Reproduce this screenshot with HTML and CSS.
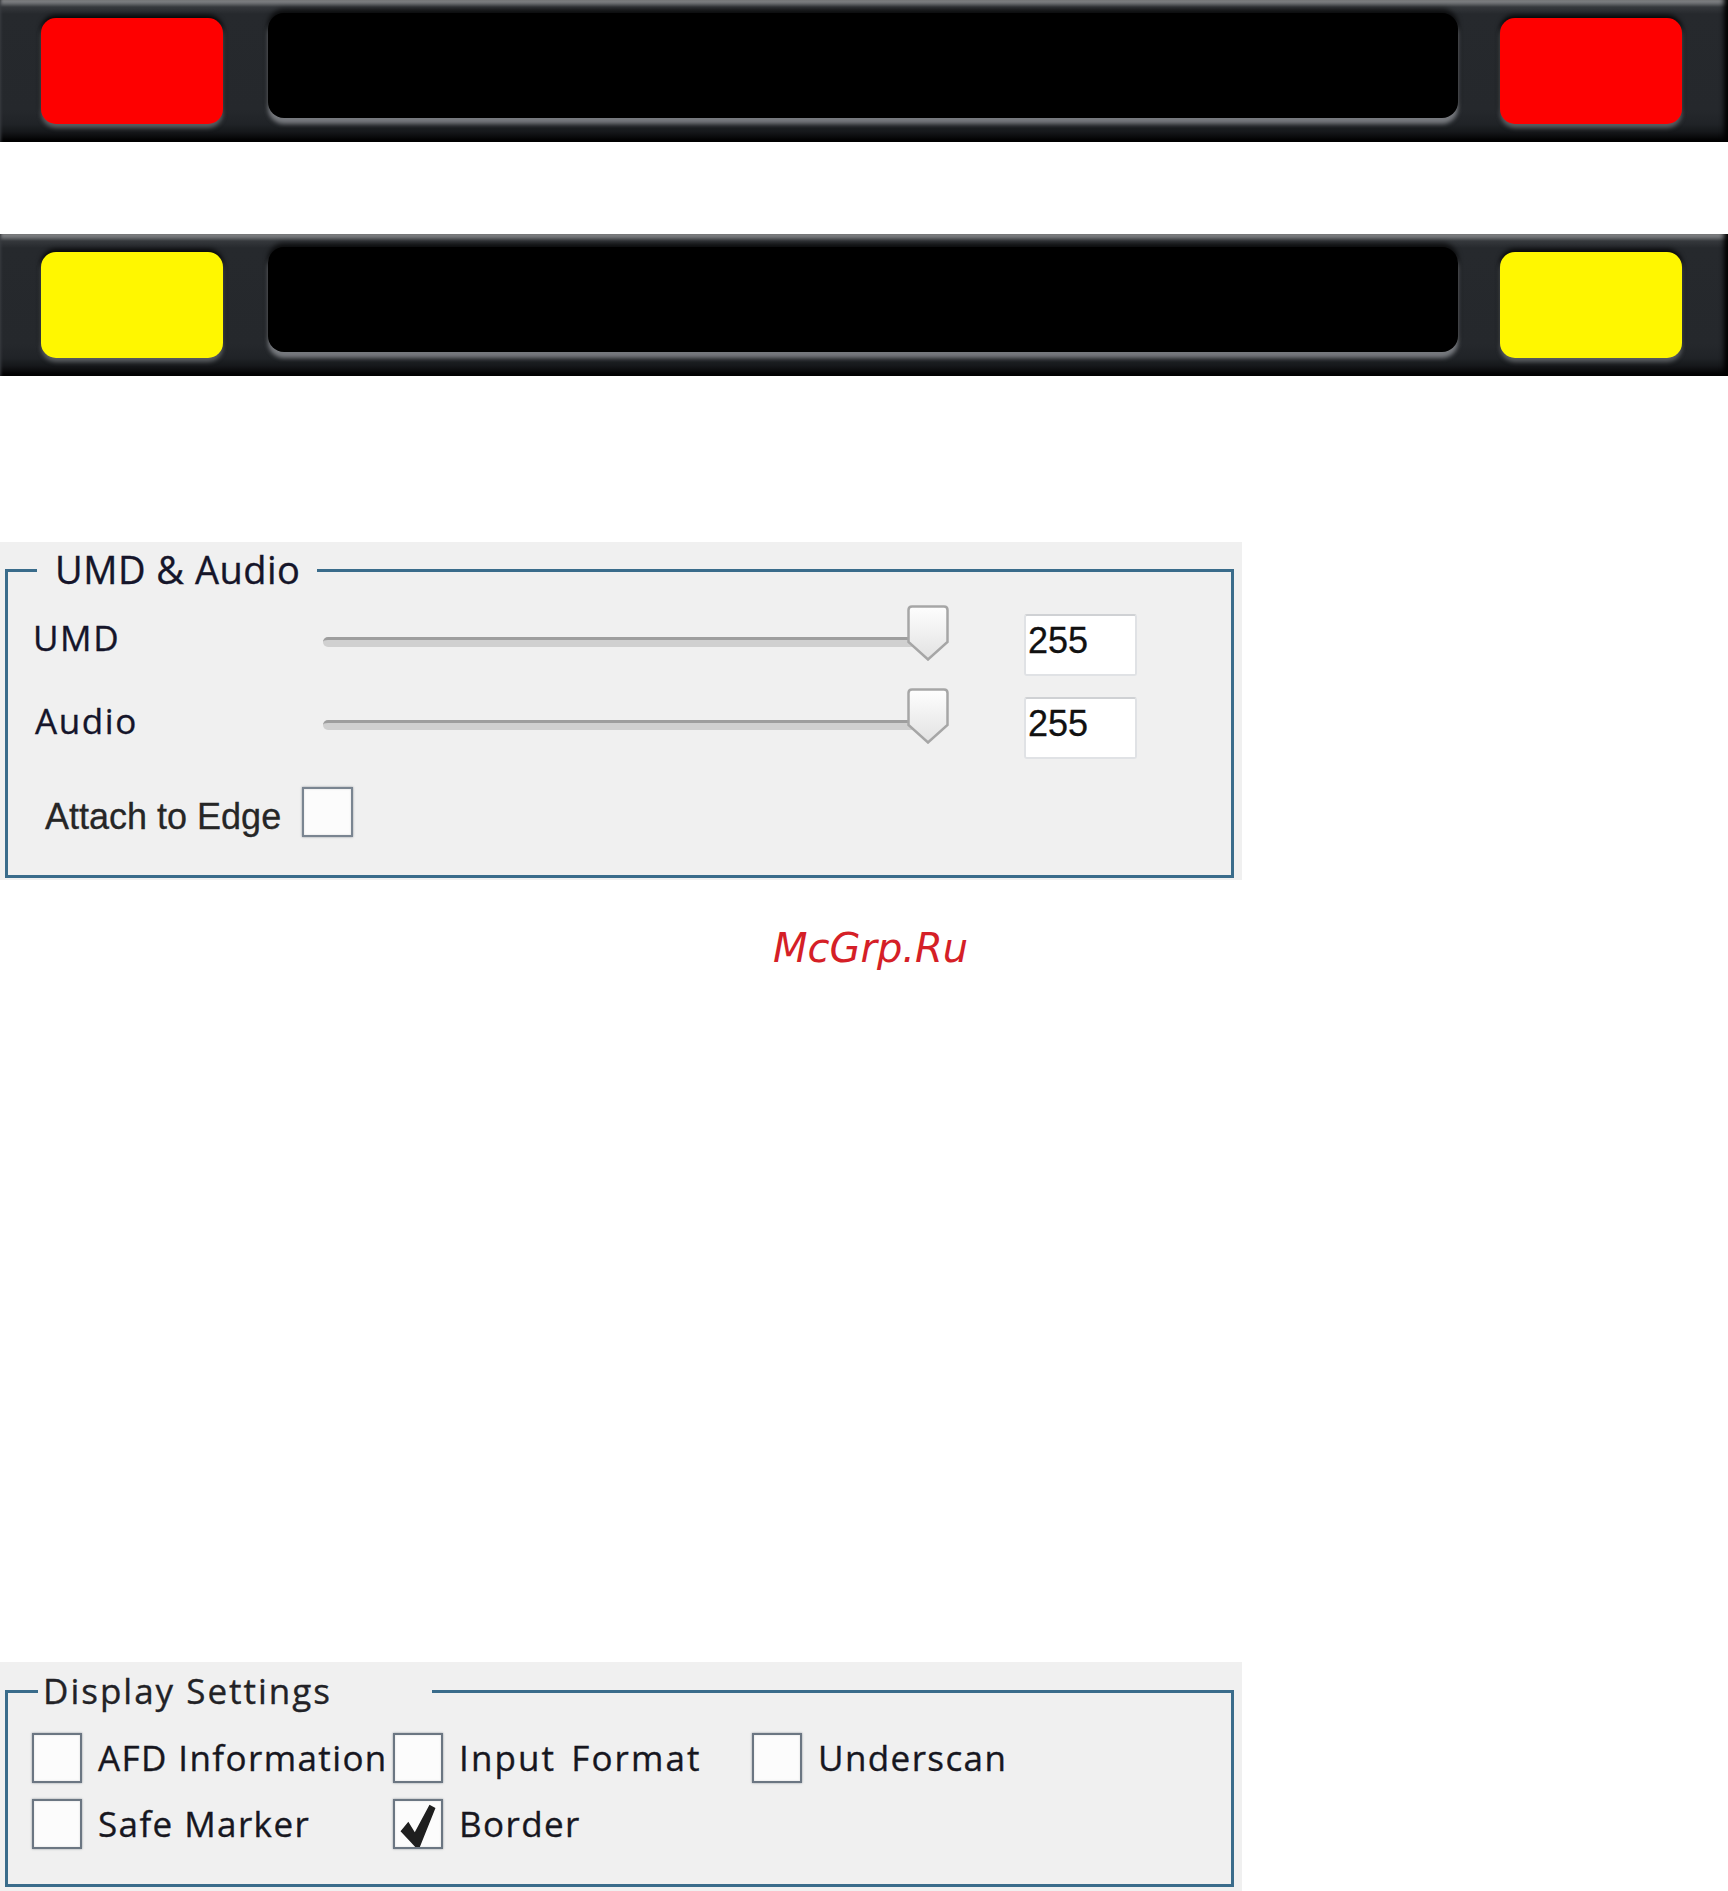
FILE: index.html
```html
<!DOCTYPE html>
<html lang="en">
<head>
<meta charset="utf-8">
<title>UMD &amp; Display Settings</title>
<link rel="stylesheet" href="styles.css">
</head>
<body>
  <div class="bar">
    <div class="lamp lamp-red"></div>
    <div class="screen"></div>
    <div class="lamp lamp-red"></div>
  </div>
  <div class="bar">
    <div class="lamp lamp-yellow"></div>
    <div class="screen"></div>
    <div class="lamp lamp-yellow"></div>
  </div>

  <div class="panel panel-umd">
    <div class="group group-umd">
      <div class="group-title title-umd">UMD &amp; Audio</div>
      <div class="slider-row">
        <div class="row-label">UMD</div>
        <div class="slider">
          <div class="track"></div>
          <svg class="thumb" viewBox="0 0 42 56">
            <defs>
              <linearGradient id="tg1" x1="0" y1="0" x2="0" y2="1">
                <stop offset="0" stop-color="#fefefe"/>
                <stop offset="1" stop-color="#e2e2e2"/>
              </linearGradient>
            </defs>
            <path d="M5 1.5H37Q40.5 1.5 40.5 5V37L21 54.5L1.5 37V5Q1.5 1.5 5 1.5Z" fill="url(#tg1)" stroke="#a6a6a6" stroke-width="2.5"/>
          </svg>
        </div>
        <div class="value">255</div>
      </div>
      <div class="slider-row">
        <div class="row-label row-label-audio">Audio</div>
        <div class="slider">
          <div class="track"></div>
          <svg class="thumb" viewBox="0 0 42 56">
            <defs>
              <linearGradient id="tg2" x1="0" y1="0" x2="0" y2="1">
                <stop offset="0" stop-color="#fefefe"/>
                <stop offset="1" stop-color="#e2e2e2"/>
              </linearGradient>
            </defs>
            <path d="M5 1.5H37Q40.5 1.5 40.5 5V37L21 54.5L1.5 37V5Q1.5 1.5 5 1.5Z" fill="url(#tg2)" stroke="#a6a6a6" stroke-width="2.5"/>
          </svg>
        </div>
        <div class="value">255</div>
      </div>
      <div class="attach-row">
        <span class="attach-label">Attach to Edge</span>
        <span class="cb cb-attach"></span>
      </div>
    </div>
  </div>

  <div class="watermark">McGrp.Ru</div>

  <div class="panel panel-display">
    <div class="group group-display">
      <div class="group-title title-display">Display Settings</div>
      <div class="options">
        <label class="option"><span class="cb"></span><span class="opt-text">AFD Information</span></label>
        <label class="option"><span class="cb"></span><span class="opt-text opt-wide">Input Format</span></label>
        <label class="option"><span class="cb"></span><span class="opt-text">Underscan</span></label>
        <label class="option"><span class="cb"></span><span class="opt-text">Safe Marker</span></label>
        <label class="option">
          <span class="cb">
            <svg class="check" viewBox="0 0 50 50">
              <path d="M6 33L14.5 22.5L21.5 34L37.5 4L44 7.5L27 50H22Z" fill="#1f1f1f"/>
            </svg>
          </span>
          <span class="opt-text">Border</span>
        </label>
      </div>
    </div>
  </div>
</body>
</html>
```

FILE: styles.css
```css
body {
  margin: 0;
  width: 1728px;
  background: #ffffff;
  font-family: "Open Sans", "Noto Sans", sans-serif;
  color: #1d1d24;
}

/* ---------- tally bars ---------- */
.bar {
  display: flex;
  align-items: flex-start;
  height: 142px;
  padding-left: 41px;
  box-sizing: border-box;
  background: linear-gradient(to bottom,
    #989a9c 0px, #707275 3px, #35383c 7px, #26292d 14px,
    #25282c 110px, #202327 124px, #15171a 132px, #050506 139px, #000 142px);
  box-shadow: inset -6px 0 5px -2px #000, inset 3px 0 3px -2px #3a3d41;
}

.bar + .bar {
  margin-top: 92px;
}

.lamp {
  width: 182px;
  height: 106px;
  margin-top: 18px;
  border-radius: 15px;
  box-shadow: 0 4px 4px rgba(125, 127, 130, 0.65), 0 -3px 5px rgba(0, 0, 0, 0.85);
}

.lamp-red {
  background: #fe0000;
}

.lamp-yellow {
  background: #fff700;
}

.screen {
  width: 1190px;
  height: 105px;
  margin: 13px 42px 0 45px;
  background: #000;
  border-radius: 16px;
  box-shadow: 0 6px 4px rgba(140, 143, 147, 0.8), 0 -4px 5px rgba(0, 0, 0, 0.7);
}

/* ---------- group panels ---------- */
.panel {
  width: 1242px;
  background: #f0f0f0;
  padding: 27px 0 0 5px;
  box-sizing: border-box;
}

.group {
  position: relative;
  width: 1229px;
  border: 3px solid #3a6c8b;
  box-sizing: border-box;
}

.group-title {
  position: absolute;
  background: #f0f0f0;
  white-space: nowrap;
  color: #15152a;
  -webkit-text-stroke: 0.35px currentColor;
}

.panel-umd {
  margin-top: 166px;
  height: 338px;
}

.group-umd {
  height: 309px;
  padding-top: 28px;
}

.title-umd {
  top: -22px;
  left: 29px;
  padding: 0 17px 0 18px;
  font-size: 38px;
  line-height: 38px;
  letter-spacing: 0.5px;
}

.slider-row {
  display: flex;
  align-items: flex-start;
  height: 83px;
  padding-left: 25px;
}

.row-label {
  width: 290px;
  margin-top: 18px;
  font-size: 35px;
  line-height: 40px;
  letter-spacing: 1.6px;
  color: #15152a;
  -webkit-text-stroke: 0.35px currentColor;
}

.row-label-audio {
  text-indent: 2px;
}

.slider {
  position: relative;
  width: 626px;
  height: 56px;
  margin-top: 5px;
}

.track {
  width: 600px;
  height: 10px;
  margin-top: 32px;
  box-sizing: border-box;
  background: #d0d0d0;
  border-top: 3px solid #9e9e9e;
  border-radius: 5px;
}

.thumb {
  position: absolute;
  top: 0;
  right: 0;
  width: 42px;
  height: 56px;
}

.value {
  width: 113px;
  height: 62px;
  margin: 14px 0 0 75px;
  box-sizing: border-box;
  padding: 0 0 8px 2px;
  background: #ffffff;
  border: 2px solid #e0e2e5;
  border-top-color: #cfd1d4;
  border-radius: 3px;
  font-family: "Liberation Sans", Arial, sans-serif;
  font-size: 36px;
  line-height: 50px;
  color: #111;
  -webkit-text-stroke: 0.3px currentColor;
}

.attach-row {
  display: flex;
  align-items: flex-start;
  padding-left: 37px;
}

.attach-label {
  margin-top: 31px;
  font-family: "Liberation Sans", Arial, sans-serif;
  font-size: 36px;
  line-height: 40px;
  color: #262626;
  -webkit-text-stroke: 0.3px currentColor;
}

.cb {
  display: block;
  flex: none;
  width: 50px;
  height: 50px;
  box-sizing: border-box;
  background: #fcfcfc;
  border: 2px solid #6b7682;
  box-shadow: 0 0 2px rgba(70, 80, 95, 0.55), inset 0 0 2px rgba(0, 0, 0, 0.15);
}

.cb-attach {
  width: 51px;
  margin: 21px 0 0 21px;
  border-color: #7a8591;
}

/* ---------- watermark ---------- */
.watermark {
  margin: 44px 0 0 773px;
  font-family: "DejaVu Sans", sans-serif;
  font-style: italic;
  font-size: 40px;
  line-height: 48px;
  color: #d51f27;
}

/* ---------- display settings ---------- */
.panel-display {
  margin-top: 690px;
  height: 229px;
  padding-top: 28px;
}

.group-display {
  height: 197px;
  padding: 40px 0 0 24px;
}

.title-display {
  top: -20px;
  left: 30px;
  padding: 0 100px 0 5px;
  font-size: 35px;
  line-height: 35px;
  letter-spacing: 2px;
  color: #222226;
}

.options {
  display: grid;
  grid-template-columns: 361px 359px auto;
  row-gap: 16px;
}

.option {
  display: flex;
  align-items: center;
  gap: 16px;
}

.opt-text {
  font-size: 35px;
  line-height: 50px;
  letter-spacing: 1.4px;
  white-space: nowrap;
  color: #17171f;
  -webkit-text-stroke: 0.35px currentColor;
}

.opt-wide {
  letter-spacing: 2.1px;
  word-spacing: 4px;
}

.check {
  display: block;
  width: 46px;
  height: 46px;
}
```
